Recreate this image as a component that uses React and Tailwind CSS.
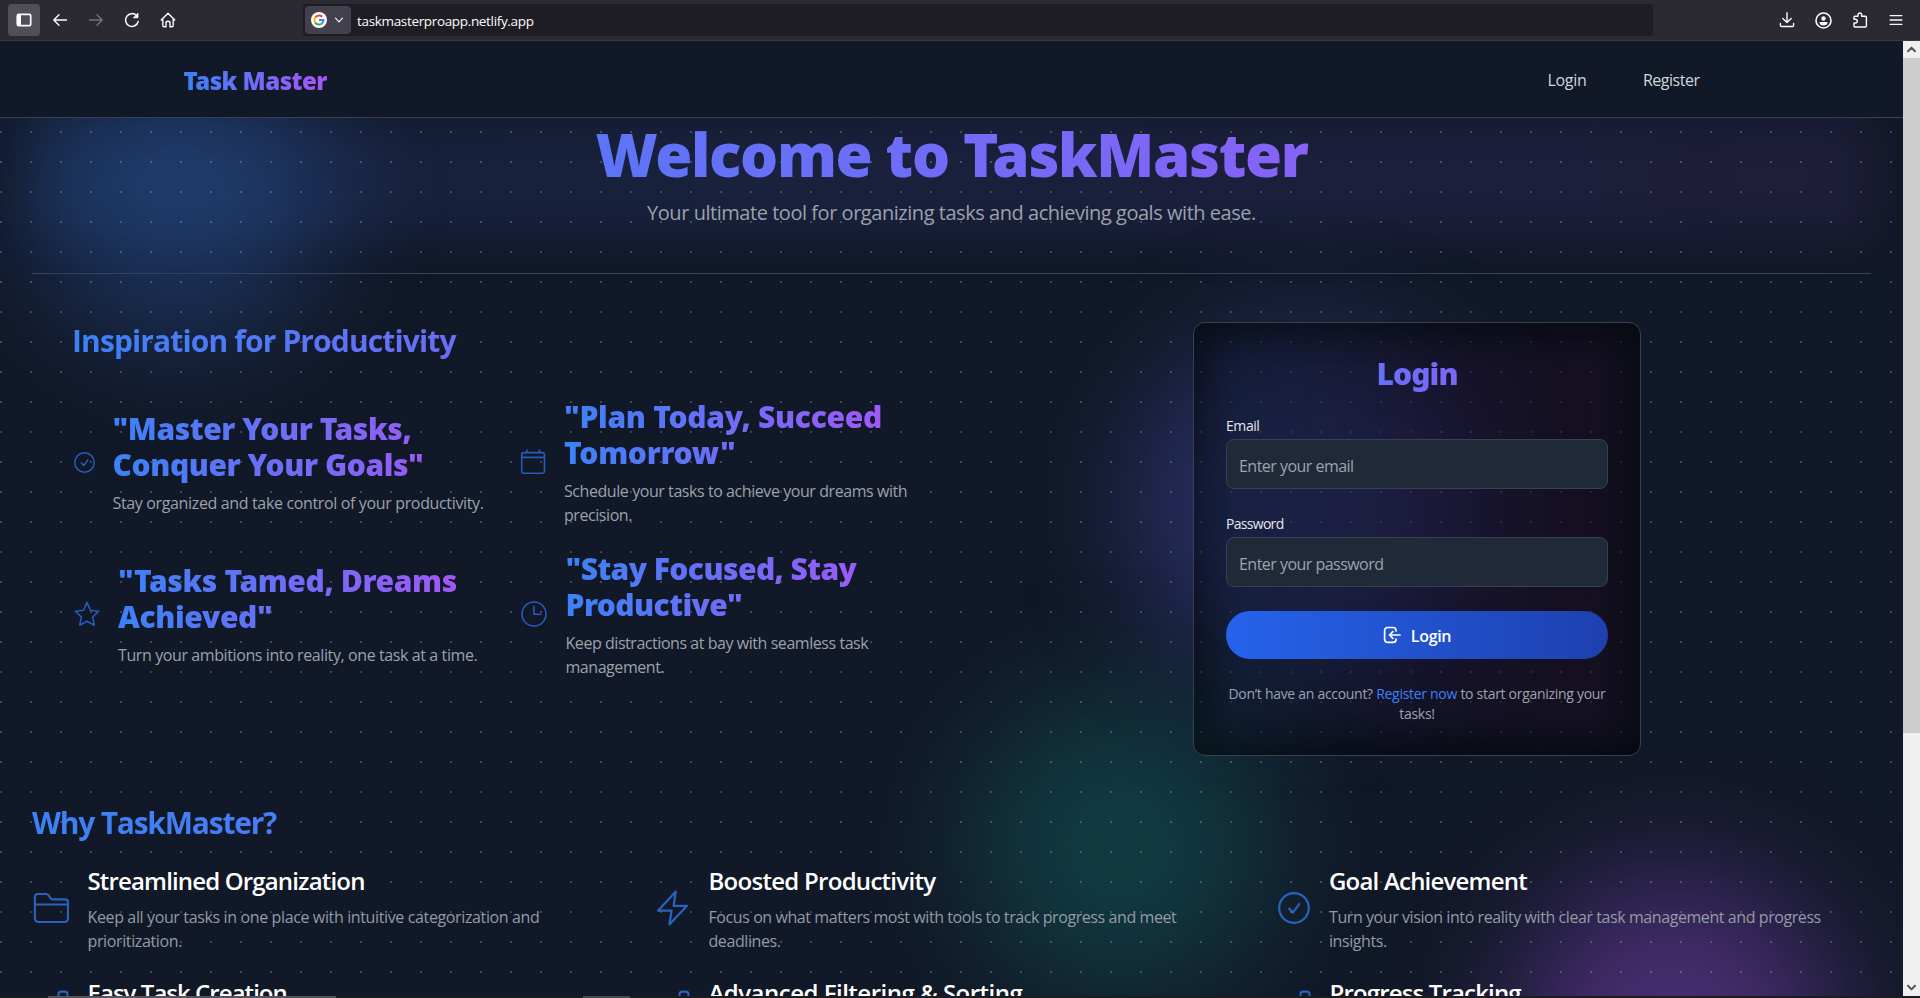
const gradientText = "bg-linear-to-r/srgb from-[#3b82f6] to-[#a855f7] bg-clip-text text-transparent";
const blackFont = "font-['Noto_Sans','Open_Sans',sans-serif] font-black";

function Icon({ className, size = 20, box = 20, stroke = 1.4, children }) {
  return (
    <svg
      className={className}
      width={size}
      height={size}
      viewBox={`0 0 ${box} ${box}`}
      fill="none"
      stroke="currentColor"
      strokeWidth={stroke}
      strokeLinecap="round"
      strokeLinejoin="round"
    >
      {children}
    </svg>
  );
}

function GoogleLogo() {
  return (
    <svg width="16" height="16" viewBox="0 0 16 16" fill="none">
      <circle cx="8" cy="8" r="8" fill="#fff" />
      <path d="M4.2 5.6A4.6 4.6 0 0 1 11.1 4.7" stroke="#ea4335" strokeWidth="1.9" />
      <path d="M4.3 10.6A4.6 4.6 0 0 1 4.3 5.4" stroke="#fbbc05" strokeWidth="1.9" />
      <path d="M11 11.4A4.6 4.6 0 0 1 4.1 10.4" stroke="#34a853" strokeWidth="1.9" />
      <path d="M8 8H12.5A4.6 4.6 0 0 1 10.9 11.5" stroke="#4285f4" strokeWidth="1.9" />
    </svg>
  );
}

function BrowserBar() {
  return (
    <div className="flex h-[41px] w-full shrink-0 items-start border-b border-[#3c3a40] bg-[#2b2a33] pt-1 text-[#fbfbfe]">
      <div className="ml-2 flex size-8 items-center justify-center rounded bg-[#504f58]">
        <Icon size={16} box={16} stroke={1.7}>
          <rect x="1.3" y="2.3" width="13.4" height="11.4" rx="1.4" />
          <path d="M1.6 3v10M3 3v10M4.3 3v10" strokeWidth="1.4" />
        </Icon>
      </div>
      <div className="ml-3 flex h-8 items-center gap-5">
        <Icon size={16} box={16}><path d="M14.5 8H2M7 2.8 1.8 8 7 13.2" /></Icon>
        <Icon size={16} box={16} className="text-[#74737b]"><path d="M1.5 8H14M9 2.8 14.2 8 9 13.2" /></Icon>
        <Icon size={16} box={16} stroke={1.5}>
          <path d="M14.2 9.5A6.4 6.4 0 1 1 12.6 3.6" />
          <path d="M14 1.4v4.4H9.6z" fill="currentColor" strokeWidth="0.8" />
        </Icon>
        <Icon size={16} box={16}>
          <path d="M1.2 8 8 1.2 14.8 8M2.8 6.8V13.4q0 1.4 1.4 1.4H6V10.8q0-1.6 2-1.6t2 1.6V14.8H11.8q1.4 0 1.4-1.4V6.8" />
        </Icon>
      </div>
      <div className="ml-[127px] flex h-8 w-[1350px] items-center rounded bg-[#1e1d24] pl-[2px]">
        <div className="flex h-7 w-[46px] items-center gap-[7px] rounded bg-[#42414d] pl-[6px]">
          <GoogleLogo />
          <Icon size={10} box={10} stroke={1.1}><path d="M1.5 3.2 5 6.8 8.5 3.2" /></Icon>
        </div>
        <span className="ml-[6px] pt-[2px] text-[13.5px] tracking-[-0.025em] whitespace-nowrap">taskmasterproapp.netlify.app</span>
      </div>
      <div className="ml-auto flex h-8 items-center gap-5 pr-4">
        <Icon size={16} box={16}><path d="M8 .8v9.6M3.8 6.4 8 10.6 12.2 6.4M1.4 11.5v1.8q0 1.2 1.2 1.2h10.8q1.2 0 1.2-1.2v-1.8" /></Icon>
        <Icon size={17} box={17} stroke={1.6}>
          <circle cx="8.5" cy="8.5" r="7.5" />
          <circle cx="8.5" cy="6.5" r="2.2" fill="currentColor" stroke="none" />
          <path d="M4.5 10h8q0 3.6-4 3.6t-4-3.6z" fill="currentColor" stroke="none" />
        </Icon>
        <Icon size={16} box={16}>
          <path d="M2 5.2q0-1 1-1h3V2.8a1.8 1.8 0 0 1 3.6 0v1.4H13.4q1 0 1 1v8.800q0 1-1 1H3q-1 0-1-1v-3h1.4a1.9 1.9 0 0 0 0-3.8H2z" />
        </Icon>
        <Icon size={16} box={16}><path d="M2.2 3.6h11.6M2.2 8h11.6M2.2 12.4h11.6" /></Icon>
      </div>
    </div>
  );
}

function Scrollbar() {
  return (
    <div className="flex w-[17px] shrink-0 flex-col bg-[#f0f0f0] text-[#555]">
      <div className="flex h-[17px] items-center justify-center">
        <Icon size={11} box={11} stroke={2}><path d="M2 7.2 5.5 3.6 9 7.2" /></Icon>
      </div>
      <div className="h-[675px] bg-[#cdcdcd]" />
      <div className="mt-auto flex h-[17px] items-center justify-center">
        <Icon size={11} box={11} stroke={2}><path d="M2 3.8 5.5 7.4 9 3.8" /></Icon>
      </div>
    </div>
  );
}

function CheckCircle({ size, stroke }) {
  return (
    <Icon size={size} box={32} stroke={stroke}>
      <circle cx="16" cy="16" r="14.8" />
      <path d="M11.2 16.6 14.8 20.6 21.2 12.2" />
    </Icon>
  );
}

const calendar = (
  <Icon size={26} box={26} stroke={1.6}>
    <rect x="1.7" y="3.6" width="22.8" height="20.6" rx="2.4" />
    <path d="M1.7 8.4h22.8M7 1v2.6M19.4 1v2.6" />
  </Icon>
);
const star = (
  <Icon size={26} box={26} stroke={1.6}>
    <path d="M13 1.4 16.4 9.3 24.8 10.2 18.6 16 20.3 24.2 13 20.2 5.7 24.2 7.4 16 1.2 10.2 9.6 9.3z" />
  </Icon>
);
const clock = (
  <Icon size={26} box={26} stroke={1.6}>
    <circle cx="13" cy="13" r="12" />
    <path d="M12.9 5.2v8.1h6.9" />
  </Icon>
);
const folder = (
  <Icon size={36} box={36} stroke={2.1}>
    <path d="M1.9 28V7q0-3 3-3h8.2q1.4 0 2.3 1.2l2.4 3.2q.8 1 2 1H32q3 0 3 3V28q0 4-4 4H5.900q-4 0-4-4z" />
    <path d="M2.200 14.500h32.600" />
  </Icon>
);
const bolt = (
  <Icon size={36} box={36} stroke={2.2}>
    <path d="M20.800 1.600 3.200 20.600H16.600L14.400 34.400 32 15.800H18.600z" />
  </Icon>
);

function Quote({ icon, gap, width, title, titleClass, text, textClass }) {
  return (
    <div className="flex items-center">
      <span className={`shrink-0 text-[#265bb8] ${gap}`}>{icon}</span>
      <div className={`pt-[2px] ${width}`}>
        <h3 className={`text-3xl leading-9 ${blackFont} ${gradientText} ${titleClass}`}>{title}</h3>
        <p className={`mt-2 text-base text-[#9ca1ab] ${textClass}`}>{text}</p>
      </div>
    </div>
  );
}

function Feature({ icon, title, text, titleClass, textClass }) {
  return (
    <div className="flex items-center">
      <span className="flex w-[55.5px] shrink-0 pl-[1px] text-[#2b62c0]">{icon}</span>
      <div className="pt-[2px]">
        <h3 className={`text-2xl leading-8 font-semibold text-white ${titleClass}`}>{title}</h3>
        <p className={`mt-2 max-w-[520px] text-base text-[#949aa6] ${textClass}`}>{text}</p>
      </div>
    </div>
  );
}

function LaterFeature({ title, titleClass }) {
  return (
    <div className="flex items-start pt-[2px]">
      <span className="w-[55.5px] shrink-0 pt-[13px] pl-[25px] text-[#2b62c0]">
        <Icon size={12} box={12} stroke={2.2}><path d="M1.500 11V4.500q0-2.800 2.800-2.800h3.400q2.800 0 2.800 2.800V11" /></Icon>
      </span>
      <h3 className={`text-2xl leading-8 font-semibold text-white ${titleClass}`}>{title}</h3>
    </div>
  );
}

function Field({ label, labelClass, placeholder, type }) {
  return (
    <label className="block pt-px">
      <span className={`block text-sm leading-5 text-gray-200 ${labelClass}`}>{label}</span>
      <input
        type={type}
        placeholder={placeholder}
        className="mt-[3px] block h-[50px] w-full rounded-lg border border-[#374151] bg-[#1f2937] px-3 pt-[3px] text-base tracking-[-0.033em] placeholder:text-[#9ca3af]"
      />
    </label>
  );
}

function LoginCard() {
  return (
    <div className="relative h-[434px] w-[448px] overflow-hidden rounded-xl border border-[#374151] bg-black/50">
      <div className="absolute inset-4 bg-linear-to-r/srgb from-[#3b82f6]/10 via-[#8b5cf6]/8 to-[#c03fd0]/7 blur-lg" />
      <div className="relative px-8 pt-[33px]">
        <h2 className={`text-center text-3xl leading-9 tracking-[-0.030em] ${blackFont} ${gradientText}`}>Login</h2>
        <div className="mt-[23px] flex flex-col gap-6">
          <Field label="Email" labelClass="tracking-[-0.03em]" placeholder="Enter your email" type="email" />
          <Field label="Password" labelClass="tracking-[-0.05em]" placeholder="Enter your password" type="password" />
          <button className="flex h-12 w-full items-center justify-center gap-[10px] rounded-full bg-linear-to-r/srgb from-[#2563eb] to-[#1e40af] text-white">
            <Icon size={18} box={18} stroke={1.700}>
              <path d="M13 5V4.500Q13 1.500 10 1.500H5Q1.600 1.500 1.600 5v8Q1.600 16.400 5 16.400h5Q13 16.400 13 13.400V13M17 9H6.500M9.800 5.700 6.500 9l3.300 3.300" />
            </Icon>
            <span className="pt-[2px] text-base font-semibold tracking-[-0.02em]">Login</span>
          </button>
        </div>
        <p className="-mx-2 mt-[25px] text-center text-sm leading-5 tracking-[-0.021em] text-[#9ca3af]">
          Don’t have an account? <a className="text-[#3b82f6]">Register now</a> to start organizing your
          <br />
          tasks!
        </p>
      </div>
    </div>
  );
}

export default function App() {
  return (
    <div className="flex h-[998px] w-full flex-col overflow-hidden bg-[#111827] font-['Open_Sans','Noto_Sans',sans-serif]">
      <BrowserBar />
      <div className="flex h-[955px] shrink-0">
        <div className="relative flex min-w-0 flex-1 flex-col overflow-hidden">
          <div className="absolute top-[15px] left-[35px] size-[290px] rounded-full bg-[#3b82f6]/25 blur-[60px]" />
          <div className="absolute top-[295px] left-[1135px] size-[340px] rounded-full bg-[#6366f1]/30 blur-[60px]" />
          <div className="absolute top-[655px] left-[970px] size-[300px] rounded-full bg-[#14b8a6]/22 blur-[64px]" />
          <div className="absolute top-[835px] left-[1515px] size-[320px] rounded-full bg-[#a855f7]/36 blur-[64px]" />
          <div className="absolute top-[77px] left-[32px] h-[120px] w-[1839px] bg-linear-to-r/srgb from-[#3b82f6]/10 via-[#6366f1]/11 to-[#a855f7]/9 blur-[24px]" />
          <div className="absolute inset-0 bg-[radial-gradient(circle_at_1px_1px,rgba(255,255,255,0.2)_1px,transparent_0)] bg-[size:30px_30px]" />

          <nav className="relative flex h-[77px] shrink-0 items-center border-b border-[#374151] bg-[#111827] pt-[3px] pr-[203.5px] pl-[183.5px]">
            <span className={`text-2xl leading-8 tracking-[-0.022em] ${blackFont} ${gradientText}`}>Task Master</span>
            <div className="ml-auto flex gap-[56.5px] pb-[1px] text-base text-[#d1d5db]">
              <a className="tracking-[-0.02em]">Login</a>
              <a className="tracking-[-0.030em]">Register</a>
            </div>
          </nav>

          <main className="relative px-8 pt-[6px]">
            <header className="border-b border-[#364152] pb-[46px] text-center">
              <h1 className={`text-6xl leading-[60px] tracking-[-0.0223em] ${blackFont} ${gradientText}`}>Welcome to TaskMaster</h1>
              <p className="mt-[15px] text-xl leading-7 tracking-[-0.023em] text-[#9ca1ab]">
                Your ultimate tool for organizing tasks and achieving goals with ease.
              </p>
            </header>

            <section className="mt-12 flex h-[434px] items-start pl-10">
              <div className="w-[848px]">
                <h2 className={`pt-px text-3xl leading-9 font-bold tracking-[-0.029em] ${gradientText}`}>Inspiration for Productivity</h2>
                <div className="mt-[38px] grid grid-cols-[424px_400px] gap-x-6 gap-y-[22px]">
                  <Quote
                    icon={<CheckCircle size={21} stroke={2.200} />}
                    gap="ml-[2px] mr-[17.5px]"
                    width="w-[372px]"
                    title={'"Master Your Tasks, Conquer Your Goals"'}
                    titleClass="tracking-[-0.014em]"
                    text="Stay organized and take control of your productivity."
                    textClass="whitespace-nowrap tracking-[-0.022em]"
                  />
                  <Quote
                    icon={calendar}
                    gap="mr-[18px]"
                    width="w-[350px]"
                    title={'"Plan Today, Succeed Tomorrow"'}
                    titleClass="tracking-[-0.010em]"
                    text="Schedule your tasks to achieve your dreams with precision."
                    textClass="tracking-[-0.027em]"
                  />
                  <Quote
                    icon={star}
                    gap="ml-[2px] mr-[18px]"
                    width="w-[362px]"
                    title={'"Tasks Tamed, Dreams Achieved"'}
                    titleClass="tracking-[-0.012em]"
                    text="Turn your ambitions into reality, one task at a time."
                    textClass="whitespace-nowrap tracking-[-0.025em]"
                  />
                  <Quote
                    icon={clock}
                    gap="ml-[0.5px] mr-[19px]"
                    width="w-[340px]"
                    title={'"Stay Focused, Stay Productive"'}
                    titleClass="tracking-[-0.019em]"
                    text="Keep distractions at bay with seamless task management."
                    textClass="tracking-[-0.028em]"
                  />
                </div>
              </div>
              <div className="ml-[273px]">
                <LoginCard />
              </div>
            </section>

            <section className="mt-12">
              <h2 className={`pt-px text-3xl leading-9 font-bold tracking-[-0.041em] ${gradientText}`}>Why TaskMaster?</h2>
              <div className="mt-[22px] grid grid-cols-3 gap-x-6 gap-y-[22px]">
                <Feature
                  icon={folder}
                  title="Streamlined Organization"
                  titleClass="tracking-[-0.035em]"
                  text="Keep all your tasks in one place with intuitive categorization and prioritization."
                  textClass="tracking-[-0.023em]"
                />
                <Feature
                  icon={<span className="pl-[1px]">{bolt}</span>}
                  title="Boosted Productivity"
                  titleClass="tracking-[-0.030em]"
                  text="Focus on what matters most with tools to track progress and meet deadlines."
                  textClass="tracking-[-0.026em]"
                />
                <Feature
                  icon={<span className="pl-[3px]"><CheckCircle size={32} stroke={2.2} /></span>}
                  title="Goal Achievement"
                  titleClass="-ml-[0.5px] tracking-[-0.033em]"
                  text="Turn your vision into reality with clear task management and progress insights."
                  textClass="-ml-[0.5px] tracking-[-0.0265em]"
                />
                <LaterFeature title="Easy Task Creation" titleClass="tracking-[-0.040em]" />
                <LaterFeature title="Advanced Filtering & Sorting" titleClass="tracking-[-0.021em]" />
                <LaterFeature title="Progress Tracking" titleClass="tracking-[-0.035em]" />
              </div>
            </section>
          </main>
        </div>
        <Scrollbar />
      </div>
      <div className="flex h-[2px] shrink-0 bg-[#1c1b20]">
        <div className="ml-12 w-[288px] bg-[#55545a]" />
        <div className="ml-[247px] w-[47px] bg-[#4a494f]" />
      </div>
    </div>
  );
}
